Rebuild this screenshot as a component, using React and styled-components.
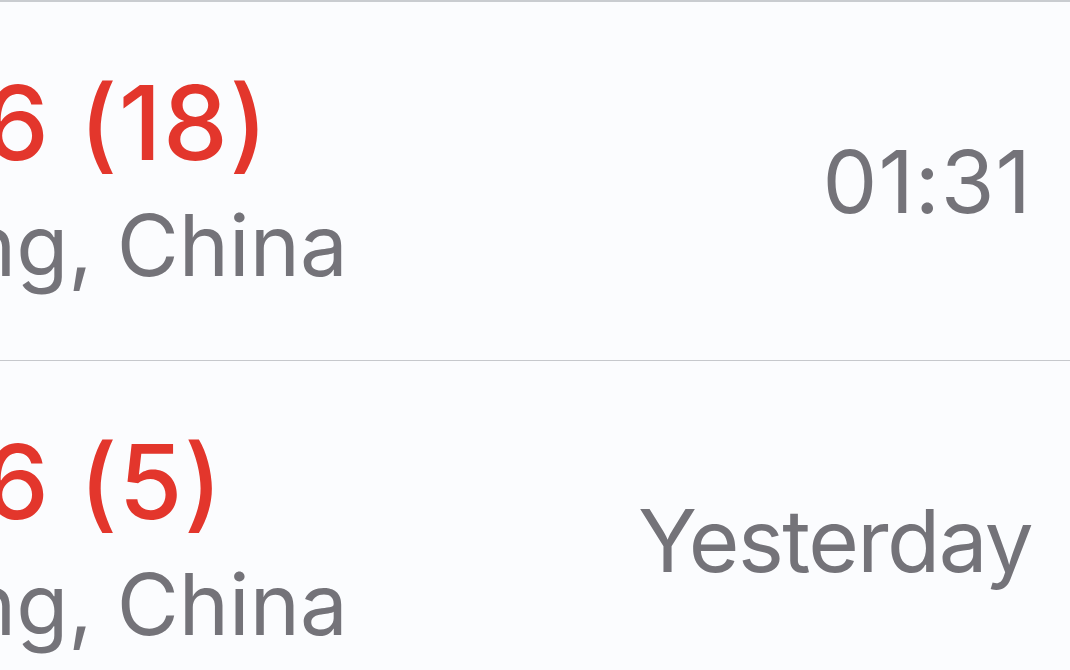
import React from 'react'
import styled, { createGlobalStyle } from 'styled-components'

const GlobalStyle = createGlobalStyle`
    html, body {
        margin: 0;
        padding: 0;
        background: #fbfcfe;
    }
    body {
        font-family: Inter, "Noto Sans", "Liberation Sans", sans-serif;
        overflow: hidden;
    }
`

const List = styled.div`
    width: 1070px;
    height: 670px;
    overflow: hidden;
    border-top: 2px solid #c9ccd0;
    box-sizing: border-box;
`

const Row = styled.div`
    height: 358px;
    display: flex;
    align-items: center;
    justify-content: space-between;
    border-bottom: 1px solid #c6c8cc;
    padding-right: 38px;
`

const Info = styled.div`
    flex: 1;
    align-self: stretch;
    overflow: hidden;
    display: flex;
    flex-direction: column;
    padding-top: 69px;
    gap: 29px;
`

const Name = styled.div`
    font-size: 103px;
    line-height: 1;
    font-weight: 500;
    letter-spacing: 1.5px;
    color: #e3362c;
    white-space: nowrap;
    margin-left: ${props => props.offset}px;
`

const Place = styled.div`
    font-size: 85px;
    line-height: 1;
    font-weight: 400;
    color: #747379;
    white-space: nowrap;
    margin-left: ${props => props.offset}px;
`

const When = styled.div`
    font-size: 87px;
    line-height: 1;
    font-weight: 400;
    color: #747379;
    white-space: nowrap;
    letter-spacing: ${props => props.spacing || 0}px;
`

const calls = [
    { name: '6 (18)', place: 'ng, China', time: '01:31', spacing: 1 },
    { name: '6 (5)', place: 'ng, China', time: 'Yesterday', spacing: -1.6 },
]

export default function App() {
    return (
        <>
            <GlobalStyle />
            <List>
                {calls.map((call, i) => (
                    <Row key={i}>
                        <Info>
                            <Name offset={-16}>{call.name}</Name>
                            <Place offset={-34}>{call.place}</Place>
                        </Info>
                        <When spacing={call.spacing}>{call.time}</When>
                    </Row>
                ))}
            </List>
        </>
    )
}
